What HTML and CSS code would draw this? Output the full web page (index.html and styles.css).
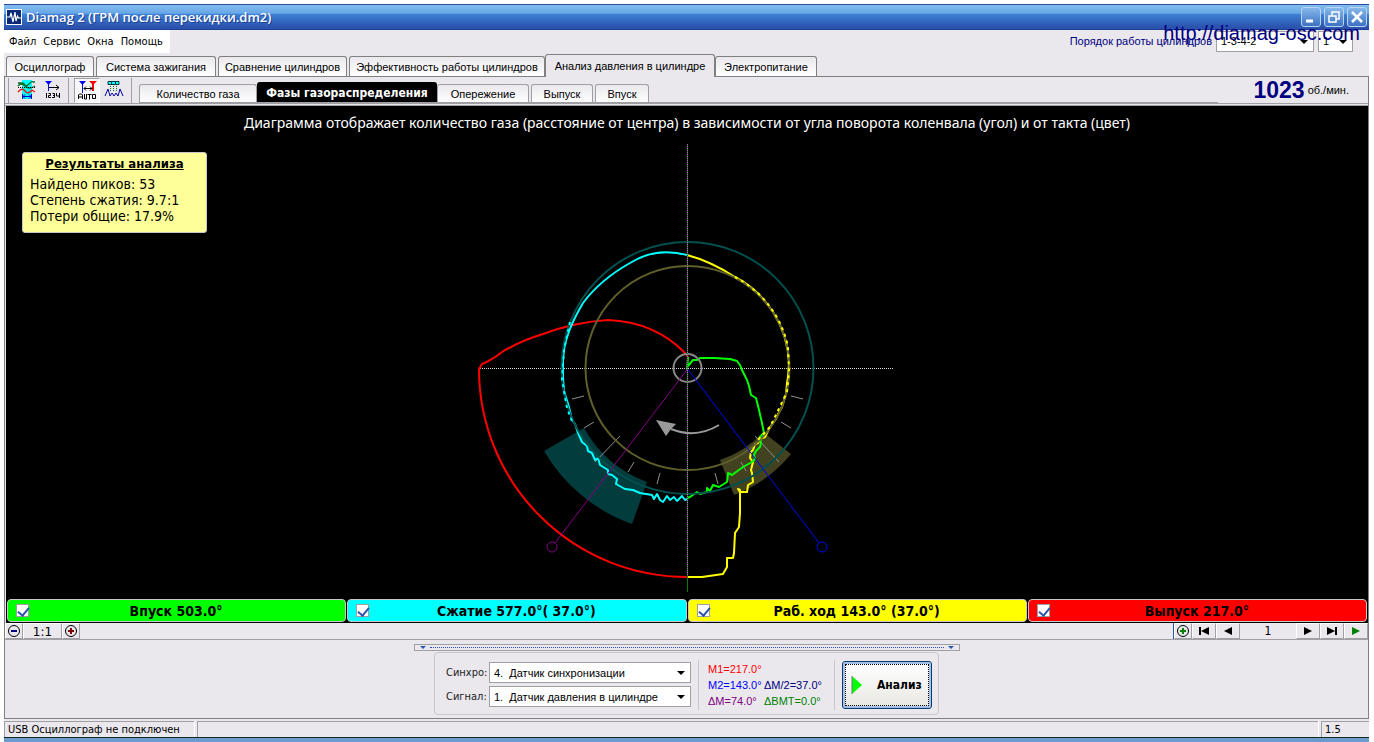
FILE: index.html
```html
<!DOCTYPE html>
<html lang="ru">
<head>
<meta charset="utf-8">
<title>Diamag 2</title>
<link rel="stylesheet" href="styles.css">
</head>
<body>
<div class="window">
  <header class="titlebar">
    <svg class="app-icon" width="16" height="16" viewBox="0 0 16 16"><rect width="16" height="16" fill="#fff"/><rect x="1" y="1" width="14" height="14" fill="#0a2a78"/><path d="M1 8h3l1-4 2 9 2-10 1 9 1.500-5 1 2h3" fill="none" stroke="#fff" stroke-width="1.200"/></svg>
    <h1>Diamag 2 (ГРМ после перекидки.dm2)</h1>
    <div class="win-buttons">
      <button aria-label="Свернуть"><svg width="18" height="18" viewBox="0 0 18 18"><path d="M4 13h7" stroke="#fff" stroke-width="3"/></svg></button>
      <button aria-label="Восстановить"><svg width="18" height="18" viewBox="0 0 18 18"><path d="M7 7V4h7v7h-3M4 8h7v6H4z" fill="none" stroke="#fff" stroke-width="1.500"/></svg></button>
      <button aria-label="Закрыть"><svg width="18" height="18" viewBox="0 0 18 18"><path d="M4 4l10 10M14 4L4 14" stroke="#fff" stroke-width="2.500"/></svg></button>
    </div>
    <div class="site-mark">http://diamag-osc.com</div>
  </header>

  <div class="menu-row">
    <nav class="menu"><a href="#">Файл</a><a href="#">Сервис</a><a href="#">Окна</a><a href="#">Помощь</a></nav>
    <div class="order">
      <label for="order">Порядок работы цилиндров</label>
      <span class="select order-list"><select id="order"><option>1-3-4-2</option></select></span>
      <span class="select order-first"><select aria-label="Первый цилиндр"><option>1</option></select></span>
    </div>
  </div>

  <nav class="tabs">
    <button class="w-88">Осциллограф</button>
    <button class="w-120">Система зажигания</button>
    <button class="w-129">Сравнение цилиндров</button>
    <button class="w-196">Эффективность работы цилиндров</button>
    <button class="w-170 current">Анализ давления в цилиндре</button>
    <button class="w-102">Электропитание</button>
  </nav>

  <main class="pane">
    <div class="toolbar">
      <div class="tools">
        <button aria-label="Курсоры"><svg width="22" height="22" viewBox="0 0 22 22"><rect x="6" y="1" width="10" height="19" fill="#0ff"/><path d="M2 4h4q2 0 3 2t4-1 4-2h2M2 7q3-4 7 0t10 0" fill="none" stroke="#087028" stroke-width="1.300"/><path d="M2 13q4-5 7-1t7-1l3 2" fill="none" stroke="#f01010" stroke-width="1.300"/><path d="M2 8.500h18" stroke="#000" stroke-dasharray="1 1"/><path d="M6.500 15v5M15.500 15v5M7 17.500h8M9 15.500l-2 2 2 2M13 15.500l2 2-2 2" stroke="#0000c8" fill="none"/></svg></button>
        <button aria-label="Нумерация"><svg width="22" height="22" viewBox="0 0 22 22"><path d="M3 2h7L6.500 6z" fill="#00f"/><path d="M6.500 4v8" stroke="#00f"/><path d="M7 8.500h10M14 6l3 2.500-3 2.500" fill="none" stroke="#000"/><path d="M4.500 14v5M6.500 14.500h2v2h-2v2h2.500M10.500 14.500h2v4h-2.500M11 16.500h1.500M14.500 14v3h3M17.500 14v5" fill="none" stroke="#000"/></svg></button>
        <button class="pressed" aria-label="Авто"><svg width="24" height="22" viewBox="0 0 24 22"><path d="M4 2h7L7.500 6z" fill="#00f"/><path d="M7.500 4v10" stroke="#00f"/><path d="M14 2h8l-4 4z" fill="#f00"/><path d="M18 4v8" stroke="#f00" stroke-width="2"/><path d="M9 9.500h8M11 7.500l-2 2 2 2M15 7.500l2 2-2 2" fill="none" stroke="#000"/><path d="M3.500 20v-4l1-1h2l1 1v4M4 18h3M9.500 15v5h2v-5M12.500 15.500h4M14.500 15.500v5M17.500 15.500h3v4h-3z" fill="none" stroke="#000"/></svg></button>
        <button aria-label="Пики"><svg width="22" height="22" viewBox="0 0 22 22"><path d="M5 2.500h11v3H5z" fill="#0ff" stroke="#003b3b"/><path d="M8.500 3v2M12.500 3v2" stroke="#003b3b"/><path d="M7.500 7v6M10.500 7v6M13.500 7v6" stroke="#087028" stroke-dasharray="1 1"/><path d="M2 17l3-7 2 7 2-3 2 3 2-3 2 3 2-7 3 7" fill="none" stroke="#0000a8"/></svg></button>
      </div>
      <nav class="subtabs">
        <button class="w-118">Количество газа</button>
        <button class="w-180 current">Фазы газораспределения</button>
        <button class="w-92">Опережение</button>
        <button class="w-62">Выпуск</button>
        <button class="w-54">Впуск</button>
      </nav>
      <div class="rpm"><strong>1023</strong> об./мин.</div>
    </div>

    <section class="chart">
      <h2>Диаграмма отображает количество газа (расстояние от центра) в зависимости от угла поворота коленвала (угол) и от такта (цвет)</h2>
      <aside class="results">
        <h3>Результаты анализа</h3>
        <p>Найдено пиков: 53</p>
        <p>Степень сжатия: 9.7:1</p>
        <p>Потери общие: 17.9%</p>
      </aside>
      <svg class="phases" width="430" height="450" viewBox="472 143 430 450">
        <path d="M544 451L584 428A120 120 0 0 0 647 482L632 524A166 166 0 0 1 544 451Z" fill="#033c3c"/>
        <path d="M720 460A98 98 0 0 0 763 432L791 454A135 135 0 0 1 734 495Z" fill="#424220"/>
        <path d="M480 368.500H894" stroke="#d8d8d8" stroke-dasharray="1 1"/>
        <g fill="none" stroke="#909090">
          <path d="M572 399l12-3M584 428l10-6M595 462l25-26M628 472l6-10M657 484l3-11M791 396l12 3M781 422l10 6M755 436l24 26M741 462l5 9M715 473l3 11"/>
        </g>
        <g fill="none" stroke-width="2" stroke-linejoin="round">
          <path stroke="#f00" d="M688 357L685 353Q655 322 608 320Q575 322 543 334Q520 341 502 352Q492 360 482 364L479 369A208 208 0 0 0 687 577"/>
          <path stroke="#ff0" d="M687 577h15L723 574L727 567V558H733L734 553L735 533L739 527L740 513V490L738 489L740 492H747L748 485L753 482L752 473L751 470L753 462L750 458L751 452L753 450L755 444L758 443L760 439L765 437L767 433L770 427L773 423L776 419L778 414L782 407L786 394L787 383L788 377L789 363A102 102 0 0 0 735 277Q710 261 687 255"/>
          <path stroke="#0ff" d="M687 255Q655 247 630 263Q600 280 583 303Q567 330 564 350L563 360V377L564 391L569 407L572 420L575 424L578 433L582 442L587 446L588 451L592 453L595 460L598 458L600 465L608 470V474L612 475L617 479L616 484L625 489L633 490L640 493L652 495L654 499L657 494L660 500L663 502L667 496L670 500L674 497L677 501L682 496L685 500L687 499"/>
          <path stroke="#0f0" d="M687 370L688 357M688 366L693 360H697L700 358L714 358L730 359L737 361L740 365L742 370L747 380L749 386L751 395L756 398L759 410L762 423L764 433L760 437L761 443L760 447L756 451L754 455L755 459L752 462L743 467L732 475L728 473L727 482L719 487L713 485L710 491L707 488V492L700 494L697 492L690 497L687 498"/>
        </g>
        <g fill="none" stroke-width="2">
          <circle cx="687.500" cy="368" r="126" stroke="#005050"/>
          <circle cx="687.500" cy="368" r="102" stroke="#5f5f2c"/>
          <circle cx="687.500" cy="368" r="14" stroke="#888"/>
        </g>
        <g fill="none" stroke="#0ff" stroke-width="2" stroke-dasharray="3 4">
          <path d="M570 322L564 350L562 380L567 408L573 424"/>
          <path stroke="#ff0" d="M735 277A102 102 0 0 1 788 347L789 372L787 392L770 427L756 442"/>
        </g>
        <path d="M687.500 144V592" stroke="#008000"/>
        <path d="M687.500 144V576" stroke="#c060c0" stroke-dasharray="1 1"/>
        <g fill="none">
          <path d="M687.500 369L819 543" stroke="#0000f0"/>
          <circle cx="822" cy="547" r="5" stroke="#0000f0"/>
          <path d="M687.500 369L555 543" stroke="#880088"/>
          <circle cx="552" cy="547" r="5" stroke="#880088"/>
          <path d="M719 425Q696 439 671 429" stroke="#999" stroke-width="2"/>
        </g>
        <path d="M656 420L676 424L671 429L666 436Z" fill="#999"/>
      </svg>
    </section>

    <div class="strokes">
      <label class="intake"><input type="checkbox" checked><span>Впуск 503.0°</span></label>
      <label class="compression"><input type="checkbox" checked><span>Сжатие 577.0°( 37.0°)</span></label>
      <label class="power"><input type="checkbox" checked><span>Раб. ход 143.0° (37.0°)</span></label>
      <label class="exhaust"><input type="checkbox" checked><span>Выпуск 217.0°</span></label>
    </div>

    <div class="strip">
      <div class="strip-group">
        <button class="flat w-18" aria-label="Уменьшить"><svg width="14" height="14" viewBox="0 0 14 14"><circle cx="7" cy="7" r="5.500" fill="none" stroke="#000"/><path d="M4 7h6" stroke="#000080" stroke-width="2"/></svg></button>
        <button class="flat w-39">1:1</button>
        <button class="flat w-18" aria-label="Увеличить"><svg width="14" height="14" viewBox="0 0 14 14"><circle cx="7" cy="7" r="5.500" fill="none" stroke="#000"/><path d="M4 7h6M7 4v6" stroke="#800000" stroke-width="2"/></svg></button>
      </div>
      <div class="strip-group right">
        <button class="flat w-18" aria-label="Добавить"><svg width="14" height="14" viewBox="0 0 14 14"><circle cx="7" cy="7" r="5.500" fill="none" stroke="#000"/><path d="M4 7h6M7 4v6" stroke="#008000" stroke-width="2"/></svg></button>
        <button class="flat w-24" aria-label="В начало"><svg width="12" height="8" viewBox="0 0 12 8"><path d="M1 0h2v8H1zM11 0v8L3 4z"/></svg></button>
        <button class="flat w-24" aria-label="Назад"><svg width="12" height="8" viewBox="0 0 12 8"><path d="M10 0v8L2 4z"/></svg></button>
        <output>1</output>
        <button class="flat w-24" aria-label="Вперёд"><svg width="12" height="8" viewBox="0 0 12 8"><path d="M2 0v8l8-4z"/></svg></button>
        <button class="flat w-24" aria-label="В конец"><svg width="12" height="8" viewBox="0 0 12 8"><path d="M9 0h2v8H9zM1 0v8l8-4z"/></svg></button>
        <button class="flat w-24" aria-label="Пуск"><svg width="12" height="8" viewBox="0 0 12 8"><path d="M2 0v8l8-4z" fill="#008000"/></svg></button>
      </div>
    </div>

    <section class="analysis">
      <div class="splitter"><i></i><b></b><i></i></div>
      <form class="controls">
        <div class="sources">
          <label for="sync">Синхро:</label>
          <span class="select"><select id="sync"><option>4.&nbsp; Датчик синхронизации</option></select></span>
          <label for="signal">Сигнал:</label>
          <span class="select"><select id="signal"><option>1.&nbsp; Датчик давления в цилиндре</option></select></span>
        </div>
        <div class="marks">
          <span class="m1">M1=217.0°</span><span></span>
          <span class="m2">M2=143.0°</span><span class="half">ΔM/2=37.0°</span>
          <span class="dm">ΔM=74.0°</span><span class="bmt">ΔBMT=0.0°</span>
        </div>
        <button type="button" class="run"><svg width="12" height="20" viewBox="0 0 12 20"><path d="M1 1v18l10-9z" fill="#0f0"/><path d="M1 1v18" stroke="#777"/></svg><span>Анализ</span></button>
      </form>
    </section>
  </main>

  <footer class="status"><span class="w-190">USB Осциллограф не подключен</span><span class="fill"></span><span class="w-48">1.5</span></footer>
</div>
</body>
</html>
```
FILE: styles.css
```css
* { box-sizing: border-box; }
body {
  margin: 0;
  background: #fff;
  color: #000;
  font: 11px/14px "DejaVu Sans Condensed", "DejaVu Sans", sans-serif;
}
h1, h2, h3, p { margin: 0; }
button, select { font: inherit; color: inherit; padding: 0; margin: 0; border: 0; background: none; }
svg { display: block; }

.window {
  display: flex;
  flex-direction: column;
  min-height: calc(100vh - 4px);
  margin: 4px 5px 0 4px;
  background: #eae8ed;
  border-bottom: 4px solid #6d9bcd;
}

/* Title bar */
.titlebar {
  position: relative;
  display: flex;
  align-items: center;
  gap: 4px;
  height: 26px;
  padding: 0 2px;
  color: #fff;
  background: linear-gradient(#83bdee, #69a8e8 34%, #3d7fd3 40%, #2b53ae 92%, #2b53ae);
  border-top: 1px solid #2c4da0;
  border-bottom: 1px solid #1c3f94;
}
.titlebar h1 {
  flex: 1;
  font: 600 13px/18px "Open Sans", "Noto Sans", sans-serif;
  text-shadow: 1px 1px #1c3f94;
}
.win-buttons { display: flex; gap: 3px; }
.win-buttons button {
  display: grid;
  place-items: center;
  width: 20px;
  height: 20px;
  border: 1px solid #b7d4f4;
  border-radius: 3px;
  background: linear-gradient(#86b8ea, #3d72c2);
}
.site-mark {
  position: absolute;
  z-index: 2;
  top: 17px;
  right: 9px;
  color: #000080;
  font: 20px/22px "Liberation Sans", sans-serif;
  pointer-events: none;
}

/* Menu */
.menu-row { display: flex; justify-content: space-between; height: 23px; }
.menu { display: flex; align-items: center; gap: 7px; width: 166px; padding-left: 5px; background: #fff; }
.menu a { color: inherit; text-decoration: none; }
.order { display: flex; gap: 4px; height: 22px; padding-right: 16px; align-items: center; color: #000080; font-family: "Liberation Sans", sans-serif; }
.order-list { width: 98px; }
.order-first { width: 35px; }

.select { position: relative; display: block; height: 21px; color: #000; font-family: "Liberation Sans", sans-serif; }
.select select {
  appearance: none;
  display: block;
  width: 100%;
  height: 100%;
  padding: 0 16px 0 4px;
  background: #fff;
  border: 1px solid #a0a0a4;
  border-radius: 0;
}
.select::after {
  content: "";
  position: absolute;
  right: 6px;
  top: 9px;
  border: 4px solid transparent;
  border-top-color: #000;
  border-bottom: 0;
  pointer-events: none;
}

/* Tabs */
.tabs, .subtabs { display: flex; align-items: flex-end; font-family: "Liberation Sans", sans-serif; }
.tabs { gap: 2px; height: 23px; padding-left: 2px; }
.tabs button {
  height: 20px;
  border: 1px solid #808080;
  border-bottom: 0;
  border-radius: 3px 3px 0 0;
  background: linear-gradient(#eae8ed, #fff);
  white-space: nowrap;
}
.tabs .current { position: relative; height: 23px; margin: 0 -2px -1px; background: #eae8ed; }
.w-18 { width: 18px; }
.w-24 { width: 24px; }
.w-39 { width: 39px; }
.w-48 { width: 48px; }
.w-54 { width: 54px; }
.w-62 { width: 62px; }
.w-88 { width: 88px; }
.w-92 { width: 92px; }
.w-102 { width: 102px; }
.w-118 { width: 118px; }
.w-120 { width: 120px; }
.w-129 { width: 129px; }
.w-170 { width: 170px; }
.w-180 { width: 180px; }
.w-190 { width: 190px; }
.w-196 { width: 196px; }

.pane { flex: 1; display: flex; flex-direction: column; border: 1px solid #808080; }

/* Toolbar */
.toolbar { display: flex; height: 29px; border-bottom: 3px double #a0a0a4; }
.tools { display: flex; align-items: center; width: 134px; height: 26px; padding-left: 10px; }
.tools button { display: grid; place-items: center; width: 26px; height: 25px; }
.tools .pressed {
  margin: 0 1px 0 8px;
  background: #f7f6f8;
  border: 1px solid #a0a0a4;
  border-color: #a0a0a4 #fff #fff #a0a0a4;
  box-shadow: -5px 0 #eae8ed, -6px 0 #a0a0a4;
}
.tools::before { content: ""; width: 1px; height: 25px; margin-left: -7px; margin-right: 5px; background: #a0a0a4; }
.tools::after { content: ""; width: 1px; height: 25px; margin-left: 4px; background: #a0a0a4; }
.subtabs { flex: 1; height: 26px; gap: 2px; border-bottom: 1px solid #a0a0a4; }
.subtabs button {
  height: 18px;
  border: 1px solid #a0a0a4;
  border-bottom: 0;
  border-radius: 3px 3px 0 0;
  background: linear-gradient(#eae8ed, #fff);
}
.subtabs .current {
  height: 20px;
  margin: 0 -2px;
  background: #000;
  border-color: #000;
  color: #fff;
  font: bold 12px/14px "DejaVu Sans Condensed", sans-serif;
}
.rpm {
  display: flex;
  align-items: center;
  justify-content: flex-end;
  gap: 3px;
  width: 150px;
  padding-right: 19px;
  font-family: "Liberation Sans", sans-serif;
}
.rpm strong { color: #000080; font-size: 23px; }

/* Chart */
.chart { position: relative; flex: 1; display: flex; flex-direction: column; align-items: center; background: #000; margin-left: 1px; }
.chart h2 { height: 37px; padding-top: 8px; color: #fff; font: 14px/18px "Noto Sans", sans-serif; }
.phases { flex: none; }
.results {
  position: absolute;
  left: 16px;
  top: 46px;
  width: 185px;
  height: 81px;
  padding: 3px 7px;
  background: #ffff99;
  border: 1px solid #c8c8c8;
  border-radius: 3px;
  font: 14px/16px "DejaVu Sans Condensed", sans-serif;
}
.results h3 { margin-bottom: 4px; text-align: center; text-decoration: underline; font: bold 13px/16px "DejaVu Sans Condensed", sans-serif; }

/* Stroke toggles */
.strokes { display: grid; grid-template-columns: repeat(4, 1fr); gap: 1px; height: 25px; padding: 1px; margin-left: 1px; background: #000; }
.strokes label {
  display: flex;
  align-items: center;
  padding: 0 8px;
  border: 1px solid #c8c8c8;
  border-radius: 4px;
  font: bold 14px/16px "DejaVu Sans Condensed", sans-serif;
}
.strokes span { flex: 1; padding-right: 14px; text-align: center; }
.strokes input { position: relative; appearance: none; width: 13px; height: 13px; margin: 0; background: #fff; border: 1px solid #a0a0a4; }
.strokes input:checked::after {
  content: "";
  position: absolute;
  left: 3px;
  top: 0;
  width: 5px;
  height: 9px;
  border: solid #2b53ae;
  border-width: 0 2px 2px 0;
  transform: rotate(40deg);
}
.intake { background: #0f0; }
.compression { background: #0ff; }
.power { background: #ff0; }
.exhaust { background: #f00; }

/* Navigation strip */
.strip { display: flex; justify-content: space-between; height: 17px; border-bottom: 1px solid #a0a0a4; }
.strip-group { display: flex; font: 12px/16px "DejaVu Sans", sans-serif; }
.strip-group.right { border-left: 1px solid #2b53ae; }
.flat { display: grid; place-items: center; height: 16px; border: 1px solid; border-color: #fff #a0a0a4 #a0a0a4 #fff; }
.strip output { width: 56px; text-align: center; font-family: "DejaVu Sans Condensed", sans-serif; }

/* Analysis controls */
.analysis { display: flex; flex-direction: column; align-items: center; padding: 4px 0 3px; }
.splitter { display: flex; align-items: center; gap: 4px; width: 546px; height: 7px; padding: 0 5px; border: 1px solid #a0a0a4; }
.splitter b { flex: 1; border-top: 1px dotted #2b53ae; }
.splitter i { border: 3px solid transparent; border-top-color: #2b53ae; border-bottom: 0; }
.controls {
  display: flex;
  align-items: center;
  gap: 7px;
  width: 505px;
  height: 63px;
  padding: 2px 6px 0 11px;
  margin-top: 1px;
  border: 1px solid #c8c8cc;
  border-radius: 4px;
}
.sources { display: grid; grid-template-columns: 43px 202px; row-gap: 3px; align-items: center; color: #222; }
.marks {
  display: grid;
  grid-template-columns: 56px 1fr;
  align-content: center;
  width: 137px;
  height: 50px;
  padding-left: 9px;
  border: solid #c8c8cc;
  border-width: 0 1px;
  font: 11px/16px "Liberation Sans", sans-serif;
}
.m1 { color: #f00; }
.m2 { color: #00f; }
.half { color: #000080; }
.dm { color: #800080; }
.bmt { color: #008000; }
.run {
  display: flex;
  align-items: center;
  gap: 14px;
  flex: 1;
  height: 48px;
  padding-left: 8px;
  border: 1px solid #003c74;
  border-radius: 3px;
  background: linear-gradient(#fff, #e8e7e2);
  outline: 1px dotted #000;
  outline-offset: -4px;
  box-shadow: inset 0 0 0 2px #a8c0e6;
  font: bold 12px/14px "DejaVu Sans Condensed", sans-serif;
}

/* Status bar */
.status { display: flex; gap: 3px; height: 19px; padding-top: 2px; border-bottom: 1px solid #102c20; }
.status span { padding: 1px 3px; border: solid #a0a0a4; border-width: 1px 0 0 1px; box-shadow: 1px 0 #fff; }
.status .fill { flex: 1; }
```
